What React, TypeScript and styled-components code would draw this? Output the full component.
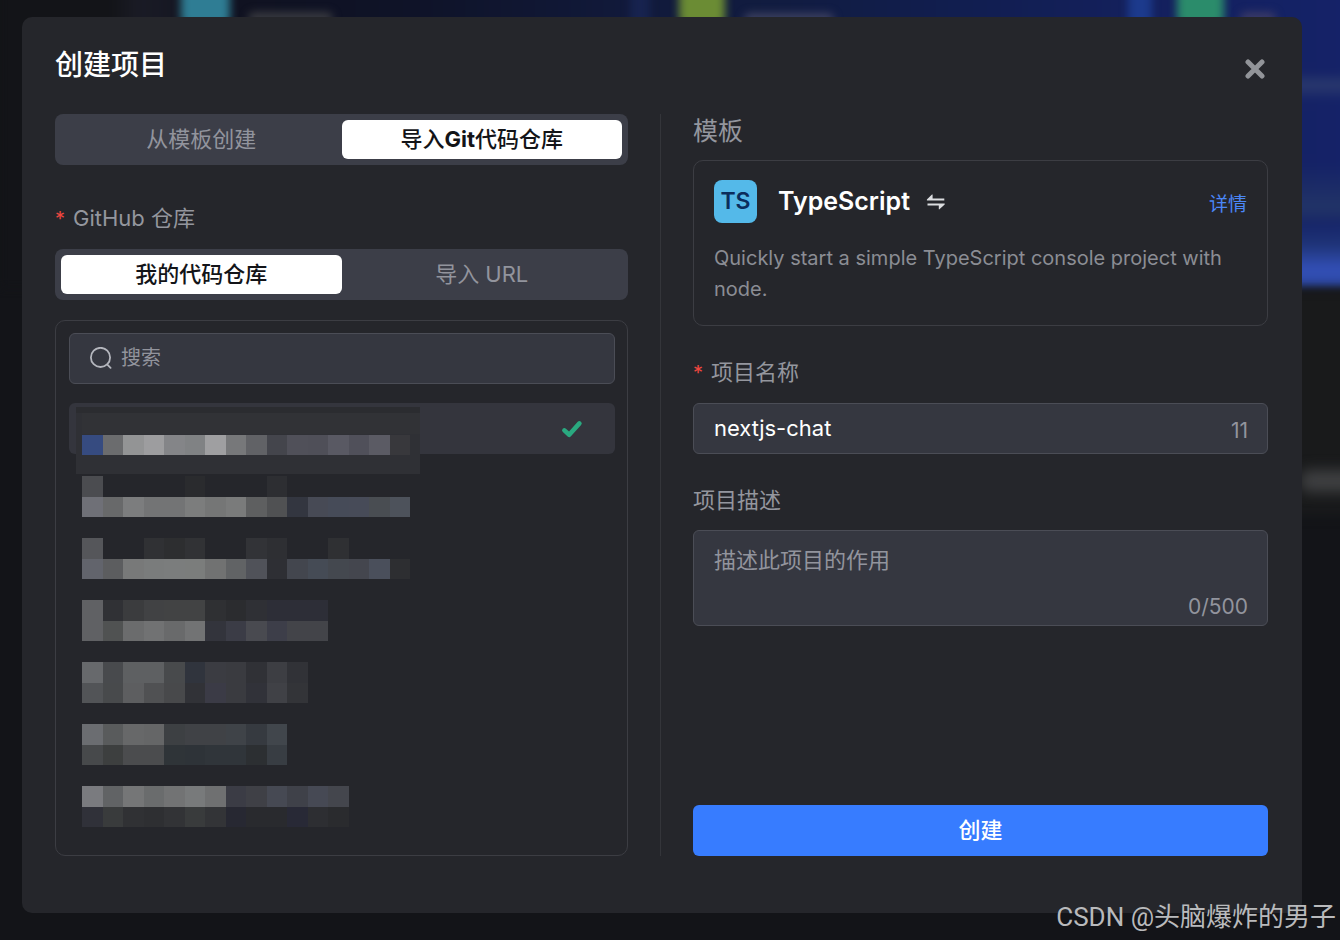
import React, { useState } from "react";
import styled, { createGlobalStyle } from "styled-components";

const GlobalStyle = createGlobalStyle`
  *, *::before, *::after { box-sizing: border-box; }
  body {
    margin: 0;
    background: #131418;
    color: #fff;
    font-family: Inter, "Noto Sans CJK SC", sans-serif;
  }
  button, input, textarea { font: inherit; color: inherit; margin: 0; }
`;

const Page = styled.div`
  position: relative;
  min-height: 100vh;
  padding: 17px 38px 27px 22px;
  overflow: hidden;
`;

/* Dimmed, blurred page behind the dialog */
const Backdrop = styled.div`
  position: absolute;
  inset: 0;
  overflow: hidden;
`;

const Banner = styled.div`
  position: absolute;
  top: -20px;
  left: 0;
  right: -40px;
  height: 308px;
  filter: blur(4px);
  background:
    linear-gradient(180deg, transparent 0 78%, #1f3478 86%, #3350b8 94%, #2c479f 100%) right / 20% 100% no-repeat,
    linear-gradient(180deg, transparent 30%, #2b3a6e 34%, transparent 39%, transparent 60%, #223467 74%, transparent 80%) right / 20% 100% no-repeat,
    linear-gradient(90deg, #131418 0 8%, #1a1b25 10%, #101220 16%, #0f1328 30%, #11193a 45%, #111c40 56%, #111e50 70%, #14205c 82%, #15236a 100%);
`;

const Blob = styled.span<{ $left: number; $top: number; $width: number; $height: number; $color: string; $blur: number }>`
  position: absolute;
  left: ${(p) => p.$left}%;
  top: ${(p) => p.$top}px;
  width: ${(p) => p.$width}px;
  height: ${(p) => p.$height}px;
  border-radius: 8px;
  background: ${(p) => p.$color};
  filter: blur(${(p) => p.$blur}px);
`;

const Dialog = styled.section`
  position: relative;
  padding: 24px 34px 57px 33px;
  border-radius: 10px;
  background: #25262b;
`;

const Header = styled.header`
  display: flex;
  align-items: flex-end;
  justify-content: space-between;
  margin-bottom: 25px;
`;

const Title = styled.h1`
  margin: 0;
  font-size: 28px;
  line-height: 48px;
  font-weight: 500;
`;

const CloseButton = styled.button`
  display: flex;
  align-items: center;
  justify-content: center;
  width: 26px;
  height: 40px;
  padding: 0;
  border: 0;
  background: none;
  color: #929499;
  cursor: pointer;
`;

const Columns = styled.div`
  display: grid;
  grid-template-columns: minmax(0, 573fr) 1px minmax(0, 575fr);
  column-gap: 32px;
`;

const Divider = styled.div`
  background: #34353a;
`;

const Column = styled.div`
  display: flex;
  flex-direction: column;
`;

const Segmented = styled.div`
  display: grid;
  grid-template-columns: 1fr 1fr;
  height: 51px;
  padding: 6px;
  border-radius: 8px;
  background: #3c3e48;
`;

const Segment = styled.button<{ $active: boolean }>`
  padding: 0;
  border: 0;
  border-radius: 6px;
  font-size: 22px;
  line-height: 31px;
  font-weight: ${(p) => (p.$active ? 500 : 400)};
  background: ${(p) => (p.$active ? "#fff" : "transparent")};
  color: ${(p) => (p.$active ? "#131418" : "#92949d")};
  cursor: pointer;
`;

const Brand = styled.span<{ $active: boolean }>`
  font-weight: ${(p) => (p.$active ? 700 : 400)};
`;

const labelText = `
  font-size: 22px;
  line-height: 31px;
  color: #94969e;
`;

const RepoLabel = styled.h2`
  ${labelText}
  margin: 38px 0 14px;
  font-weight: 400;
`;

const FieldLabel = styled.label`
  ${labelText}
  margin: 31px 0 14px;
`;

const Required = styled.span`
  margin-right: 8px;
  font-size: 20px;
  color: #ee463f;
`;

const RepoPanel = styled.div`
  flex: 1;
  margin-top: 20px;
  padding: 12px 12px 29px 13px;
  border: 1px solid #3c3d43;
  border-radius: 10px;
`;

const box = `
  border: 1px solid #4b4d56;
  border-radius: 6px;
  background: #353740;
`;

const SearchBox = styled.label`
  ${box}
  display: flex;
  align-items: center;
  gap: 9px;
  height: 51px;
  padding: 0 19px;
  color: #b4b6bd;
`;

const SearchInput = styled.input`
  flex: 1;
  min-width: 0;
  padding: 0;
  border: 0;
  outline: 0;
  background: none;
  font-size: 20px;
  line-height: 31px;
  &::placeholder { color: #92949d; opacity: 1; }
`;

const RepoList = styled.ul`
  display: flex;
  flex-direction: column;
  gap: 11px;
  margin: 19px 0 0;
  padding: 0;
  list-style: none;
`;

const RepoButton = styled.button<{ $selected: boolean }>`
  display: flex;
  align-items: center;
  justify-content: space-between;
  width: 100%;
  height: 51px;
  padding: 0 32px 0 7px;
  border: 0;
  border-radius: 6px;
  background: ${(p) => (p.$selected ? "#34353d" : "transparent")};
  cursor: pointer;
`;

const Mosaic = styled.svg`
  display: block;
  align-self: flex-end;
  overflow: visible;
`;

const SectionTitle = styled.h2`
  margin: 0 0 12px;
  font-size: 25px;
  line-height: 34px;
  font-weight: 400;
  color: #94969e;
`;

const TemplateCard = styled.article`
  padding: 19px 20px 20px;
  border: 1px solid #3c3d43;
  border-radius: 10px;
`;

const TemplateHead = styled.div`
  display: flex;
  align-items: center;
  margin-bottom: 20px;
`;

const Logo = styled.span`
  width: 43px;
  height: 43px;
  margin-right: 21px;
  border-radius: 8px;
  background: #54b9e9;
  color: #0b2d5c;
  font-size: 23px;
  line-height: 43px;
  font-weight: 600;
  text-align: center;
`;

const TemplateName = styled.h3`
  margin: 0;
  font-size: 25px;
  line-height: 43px;
  font-weight: 600;
`;

const SwapButton = styled.button`
  display: flex;
  margin-left: 16px;
  padding: 0;
  border: 0;
  background: none;
  color: #dcdde0;
  cursor: pointer;
`;

const DetailLink = styled.a`
  margin-left: auto;
  padding-top: 6px;
  font-size: 19px;
  line-height: 31px;
  color: #4b87f8;
  text-decoration: none;
`;

const Description = styled.p`
  margin: 0;
  font-size: 20px;
  line-height: 31px;
  color: #8b8d94;
`;

const NameBox = styled.div`
  ${box}
  display: flex;
  align-items: center;
  height: 51px;
  padding: 0 19px 0 20px;
`;

const NameInput = styled.input`
  flex: 1;
  min-width: 0;
  padding: 0;
  border: 0;
  outline: 0;
  background: none;
  font-size: 22px;
  line-height: 31px;
`;

const Counter = styled.span`
  padding-top: 4px;
  font-size: 21px;
  line-height: 31px;
  color: #92949d;
  text-align: right;
`;

const DescriptionBox = styled.div`
  ${box}
  display: flex;
  flex-direction: column;
  padding: 14px 19px 3px 20px;
`;

const DescriptionInput = styled.textarea`
  height: 42px;
  padding: 0;
  border: 0;
  outline: 0;
  resize: none;
  background: none;
  font-size: 22px;
  line-height: 31px;
  &::placeholder { color: #92949d; opacity: 1; }
`;

const SubmitButton = styled.button`
  height: 51px;
  margin-top: auto;
  padding: 0;
  border: 0;
  border-radius: 6px;
  background: #377cff;
  font-size: 22px;
  line-height: 31px;
  font-weight: 500;
  cursor: pointer;
`;

const Watermark = styled.div`
  position: absolute;
  right: 4px;
  bottom: 4px;
  font-family: Roboto, "Noto Sans CJK SC", sans-serif;
  font-size: 26px;
  line-height: 38px;
  color: #b9babc;
  white-space: nowrap;
`;

/* Each hidden repository name is two lines of shaded cells; "" leaves a cell clear */
const CELL = 20.5;
const repositories: { id: string; rows: string[][] }[] = [
  {
    id: "1",
    rows: [
      [],
      "#364b80 #6b6c6e #939495 #9d9d9f #848588 #808284 #9f9fa1 #77787a #616266 #44454c #505059 #4f4f58 #595963 #50505a #5b5b64 #38383c".split(" "),
    ],
  },
  {
    id: "2",
    rows: [
      ["#4b4c50", "", "", "", "", "#2a2b2e", "", "", "", "#2d2e32"],
      "#6f7077 #68696a #7c7d7e #737475 #737475 #7c7d7d #757676 #7a7b7b #5e5f60 #505153 #333640 #474a55 #464b58 #474b58 #494d52 #4d525b".split(" "),
    ],
  },
  {
    id: "3",
    rows: [
      ["#55565a", "", "", "#303134", "#2d2e30", "#313235", "", "", "#323337", "#2e2f33", "", "", "#2f3033"],
      "#62646c #5c5d5f #787979 #7a7c7c #7b7d7d #7b7d7c #717272 #616365 #505259 #2e2f34 #43464e #454b55 #44484f #44464e #4a4f5b #2d2e31".split(" "),
    ],
  },
  {
    id: "4",
    rows: [
      "#606164 #303135 #3b3c3e #414244 #424344 #424344 #2f3033 #2b2c2f #2f3035 #2d2e37 #2d2e37 #2d2e37".split(" "),
      "#606164 #505252 #6b6c6d #717273 #696a6b #727374 #33343c #3b3c46 #494a50 #3d3e49 #434449 #434449".split(" "),
    ],
  },
  {
    id: "5",
    rows: [
      "#67696c #484a4d #5e6062 #5e6062 #484a4c #30343d #3b3c42 #3a3b40 #303136 #3d3e43 #313237".split(" "),
      "#525457 #484a4c #5d5e60 #505153 #48494b #313237 #3b3b46 #3a3b40 #313239 #404146 #333438".split(" "),
    ],
  },
  {
    id: "6",
    rows: [
      "#6b6d71 #595b5c #676869 #656667 #3d4043 #404246 #404246 #3f4348 #363a40 #41464c".split(" "),
      "#47494b #3d3f3f #4b4c4e #4b4c4e #2f3438 #2e3338 #30353a #30353a #2c2f32 #383d43".split(" "),
    ],
  },
  {
    id: "7",
    rows: [
      "#7a7b7f #616365 #757677 #6a6c6d #727374 #787a7b #6f7071 #3b3c45 #3f4046 #464953 #3f4149 #464954 #44464d".split(" "),
      "#303139 #393b3c #303134 #2e2f32 #323336 #393b3c #333437 #272832 #292a2e #292a2e #282936 #2d2e32 #2a2b2e".split(" "),
    ],
  },
];

function MaskedName({ rows, patch }: { rows: string[][]; patch: boolean }) {
  return (
    <Mosaic width="344" height="40" viewBox="0 0 344 40" aria-hidden="true" shapeRendering="crispEdges">
      {patch && (
        <>
          <rect x="0" y="-7" width="344" height="67" fill="#2f3035" />
          <rect x="0" y="-7" width="344" height="6" fill="#2b2c30" />
          <rect x="6" y="-1" width="338" height="21" fill="#313236" />
        </>
      )}
      {rows.map((row, y) =>
        row.map(
          (fill, x) =>
            fill && (
              <rect key={`${y}-${x}`} x={6 + x * CELL} y={y * CELL} width={CELL} height={CELL} fill={fill} />
            )
        )
      )}
    </Mosaic>
  );
}

function CheckIcon() {
  return (
    <svg width="22" height="20" viewBox="0 0 22 20" fill="none" stroke="#2aa980" strokeWidth="4.6" strokeLinejoin="round" strokeLinecap="round" aria-hidden="true">
      <path d="M3.4 11.4 8.2 15.8 18.4 4.4" />
    </svg>
  );
}

function CloseIcon() {
  return (
    <svg width="20" height="20" viewBox="0 0 20 20" stroke="currentColor" strokeWidth="5" strokeLinecap="round" aria-hidden="true">
      <path d="M3 3 17 17M17 3 3 17" />
    </svg>
  );
}

function SearchIcon() {
  return (
    <svg width="23" height="23" viewBox="0 0 23 23" fill="none" stroke="currentColor" strokeWidth="1.8" strokeLinecap="round" aria-hidden="true">
      <circle cx="11.5" cy="10.4" r="9.6" />
      <path d="m18.6 17.8 3 3" />
    </svg>
  );
}

function SwapIcon() {
  return (
    <svg width="20" height="16" viewBox="0 0 20 16" fill="currentColor" aria-hidden="true">
      <path d="M6.6.5v3.9h11.7v2H.9v-1L5.7.8c.3-.3.6-.4.9-.3ZM1.5 9.6h17.2v1l-5 4.5c-.3.3-.7.4-.9.2v-3.7H1.5Z" />
    </svg>
  );
}

export default function App() {
  const [source, setSource] = useState("git");
  const [method, setMethod] = useState("mine");
  const [selected, setSelected] = useState("1");
  const [name, setName] = useState("nextjs-chat");
  const [description, setDescription] = useState("");

  return (
    <Page>
      <GlobalStyle />
      <Backdrop aria-hidden="true">
        <Banner />
        <Blob $left={13.5} $top={-36} $width={49} $height={62} $color="#2f7d94" $blur={4} />
        <Blob $left={18.5} $top={12} $width={85} $height={12} $color="#38393f" $blur={4} />
        <Blob $left={47} $top={-20} $width={20} $height={60} $color="#17234f" $blur={4} />
        <Blob $left={50.7} $top={-36} $width={46} $height={62} $color="#6b8c34" $blur={4} />
        <Blob $left={55.5} $top={13} $width={90} $height={12} $color="#3c405f" $blur={4} />
        <Blob $left={84.2} $top={-20} $width={24} $height={60} $color="#1c3a8c" $blur={4} />
        <Blob $left={87.8} $top={-36} $width={47} $height={62} $color="#2b8c6b" $blur={4} />
        <Blob $left={92.5} $top={12} $width={36} $height={12} $color="#3a3a66" $blur={4} />
        <Blob $left={96} $top={290} $width={80} $height={225} $color="#191a1b" $blur={6} />
        <Blob $left={97} $top={470} $width={70} $height={22} $color="#3f4042" $blur={7} />
      </Backdrop>

      <Dialog role="dialog" aria-labelledby="dialog-title">
        <Header>
          <Title id="dialog-title">创建项目</Title>
          <CloseButton type="button" aria-label="关闭">
            <CloseIcon />
          </CloseButton>
        </Header>

        <Columns>
          <Column>
            <Segmented>
              <Segment type="button" $active={source === "template"} onClick={() => setSource("template")}>
                从模板创建
              </Segment>
              <Segment type="button" $active={source === "git"} onClick={() => setSource("git")}>
                导入<Brand $active={source === "git"}>Git</Brand>代码仓库
              </Segment>
            </Segmented>

            <RepoLabel>
              <Required>*</Required>GitHub 仓库
            </RepoLabel>
            <Segmented>
              <Segment type="button" $active={method === "mine"} onClick={() => setMethod("mine")}>
                我的代码仓库
              </Segment>
              <Segment type="button" $active={method === "url"} onClick={() => setMethod("url")}>
                导入 URL
              </Segment>
            </Segmented>

            <RepoPanel>
              <SearchBox>
                <SearchIcon />
                <SearchInput type="text" placeholder="搜索" aria-label="搜索" />
              </SearchBox>
              <RepoList>
                {repositories.map((repo) => (
                  <li key={repo.id}>
                    <RepoButton
                      type="button"
                      aria-label={`代码仓库 ${repo.id}`}
                      aria-pressed={selected === repo.id}
                      $selected={selected === repo.id}
                      onClick={() => setSelected(repo.id)}
                    >
                      <MaskedName rows={repo.rows} patch={repo.id === "1"} />
                      {selected === repo.id && <CheckIcon />}
                    </RepoButton>
                  </li>
                ))}
              </RepoList>
            </RepoPanel>
          </Column>

          <Divider />

          <Column>
            <SectionTitle>模板</SectionTitle>
            <TemplateCard>
              <TemplateHead>
                <Logo>TS</Logo>
                <TemplateName>TypeScript</TemplateName>
                <SwapButton type="button" aria-label="切换模板">
                  <SwapIcon />
                </SwapButton>
                <DetailLink href="#detail">详情</DetailLink>
              </TemplateHead>
              <Description>Quickly start a simple TypeScript console project with node.</Description>
            </TemplateCard>

            <FieldLabel htmlFor="project-name">
              <Required>*</Required>项目名称
            </FieldLabel>
            <NameBox>
              <NameInput id="project-name" type="text" value={name} onChange={(e) => setName(e.target.value)} />
              <Counter>{name.length}</Counter>
            </NameBox>

            <FieldLabel htmlFor="project-description">项目描述</FieldLabel>
            <DescriptionBox>
              <DescriptionInput
                id="project-description"
                placeholder="描述此项目的作用"
                maxLength={500}
                value={description}
                onChange={(e) => setDescription(e.target.value)}
              />
              <Counter>{description.length}/500</Counter>
            </DescriptionBox>

            <SubmitButton type="button">创建</SubmitButton>
          </Column>
        </Columns>
      </Dialog>

      <Watermark>CSDN @头脑爆炸的男子</Watermark>
    </Page>
  );
}
